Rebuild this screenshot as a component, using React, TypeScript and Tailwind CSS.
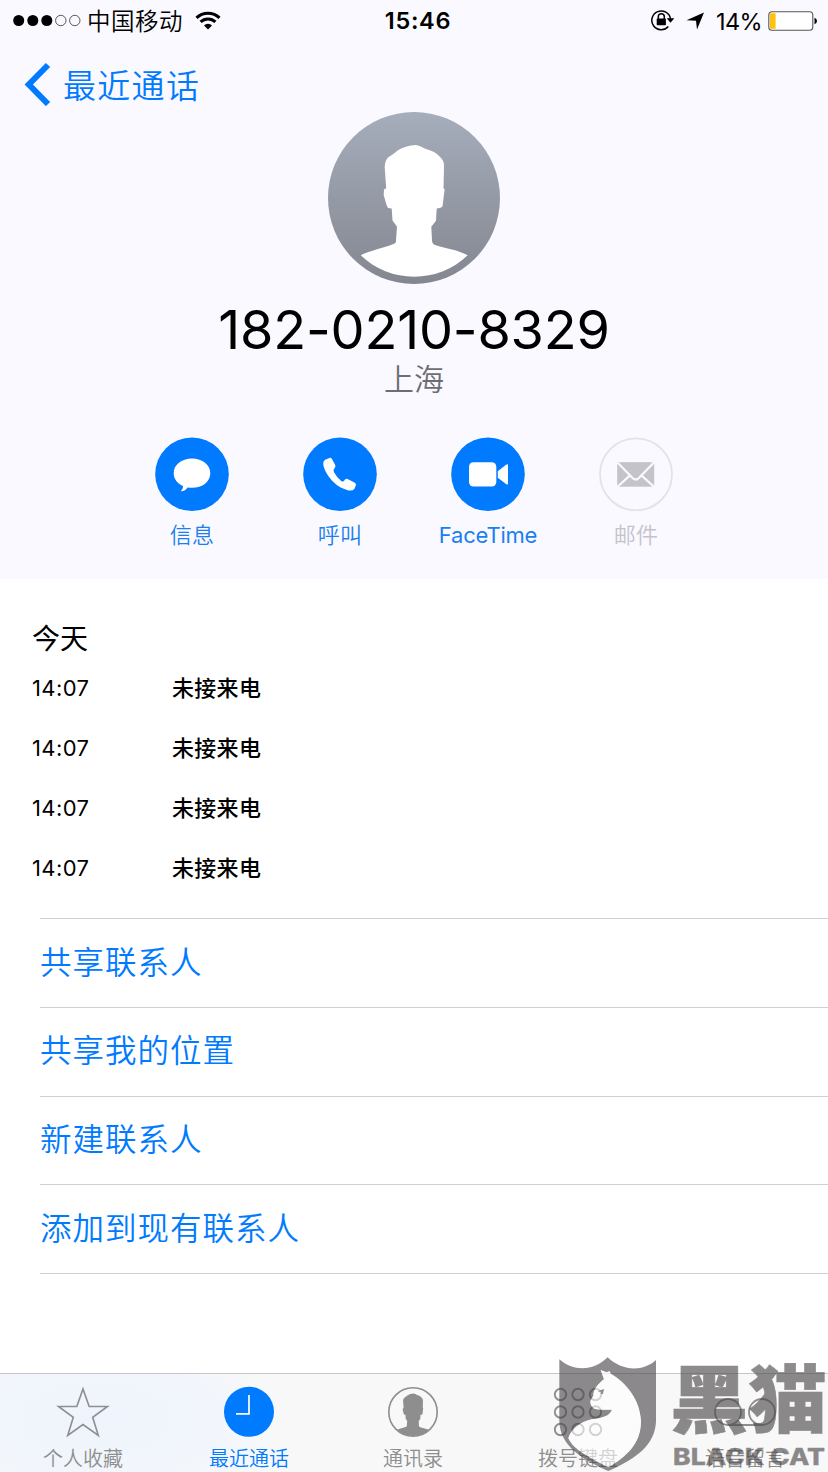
import React from "react";

const SILHOUETTE =
  "M87.7 33C92 33.5 95 36 98.7 37.3C104 39 107.500 40.500 110 43C114.500 47 116 49 116 54L115.500 76L116.600 77.500L114.500 94.500L112 96L108.700 96.500L108 108.700L103.300 114.700L104 128.500C104.300 131.500 105.500 132.500 108 133.300C118 136.500 130 138 139.700 143.300";
const SILHOUETTE_LEFT =
  "C42 138.500 56 136 65.300 132C67.500 131.200 68 130.500 68 128.500L69 114.700L64.500 108.500L63.700 96.500L60 96L58.500 93L55.700 83L56 77.500L58.200 76.300L56.700 54.700C57 50 58.500 47 60.300 45.300C63 43.500 66 41.500 69.300 38.700C74 35.800 82 33 87.700 33Z";
const BUST = `${SILHOUETTE}A77.6 77.6 0 0 1 32.7 143.3${SILHOUETTE_LEFT}`;
const BUST_LONG = `${SILHOUETTE}L160 175H12L32.7 143.3${SILHOUETTE_LEFT}`;

function StatusBar() {
  return (
    <div className="grid h-[42px] grid-cols-3 items-center text-black">
      <div className="flex items-center pl-[13px]">
        <svg width="70" height="14" viewBox="0 0 70 14">
          <circle cx="5.7" cy="6.500" r="5.500" />
          <circle cx="19.8" cy="6.500" r="5.500" />
          <circle cx="33.800" cy="6.500" r="5.500" />
          <circle cx="47.800" cy="6.500" r="5.200" fill="none" stroke="#444" strokeWidth=".9" />
          <circle cx="61.800" cy="6.500" r="5.200" fill="none" stroke="#444" strokeWidth=".9" />
        </svg>
        <span className="ml-[4px] mt-[2px] text-[23.500px] font-[350] leading-[40px] tracking-[0.5px]">中国移动</span>
        <svg className="ml-[12px] mb-[2px]" width="26" height="19" viewBox="0 0 26 19">
          <g fill="none" stroke="#000" strokeWidth="3">
            <path d="M1.500 6.800A16.500 16.500 0 0 1 24.500 6.800" />
            <path d="M5.600 10.900A10.600 10.600 0 0 1 20.400 10.900" />
          </g>
          <path d="M9 14.400A5.700 5.700 0 0 1 17 14.400L13 18.500Z" />
        </svg>
      </div>
      <div className="pl-[8px] text-center text-[23.500px] font-semibold leading-[40px] tracking-[0.700px]">15:46</div>
      <div className="flex items-center justify-end pr-[10px]">
        <svg className="mb-[2px]" width="24" height="22" viewBox="0 0 24 22">
          <path d="M17.300 17.500A9.400 9.400 0 1 1 19.500 10" fill="none" stroke="#000" strokeWidth="1.500" />
          <path d="M15.700 9.200H23.300L19.500 13.700Z" />
          <rect x="5.700" y="9.600" width="9.200" height="6.600" rx=".8" />
          <path d="M7.300 10V7.800A3 3 0 0 1 13.300 7.800V10" fill="none" stroke="#000" strokeWidth="1.500" />
        </svg>
        <svg className="ml-[11px]" width="19" height="18" viewBox="0 0 19 18">
          <path d="M18 .5L11 17.500L10 8.800L.5 8.300Z" />
        </svg>
        <span className="ml-[11px] mt-[1px] text-[23.500px] leading-[40px] tracking-[-0.6px]">14%</span>
        <svg className="ml-[6px] mb-[1px]" width="50" height="22" viewBox="0 0 50 22">
          <rect x=".8" y="1.700" width="44" height="18.500" rx="3.300" fill="#fff" stroke="#555" strokeWidth="1.100" />
          <path d="M2.500 3.200H7.600V18.700H2.500Q2 18.700 2 17.500V4.500Q2 3.200 2.500 3.200Z" fill="#fdc30c" />
          <path d="M46.500 7.700Q49 8.600 49 11Q49 13.400 46.500 14.300Z" />
        </svg>
      </div>
    </div>
  );
}

function Avatar() {
  return (
    <svg width="172" height="172" viewBox="0 0 172 172">
      <defs>
        <linearGradient id="avatar" x1="0" y1="0" x2="0" y2="1">
          <stop offset="0" stopColor="#a6adbb" />
          <stop offset="1" stopColor="#838790" />
        </linearGradient>
      </defs>
      <circle cx="86" cy="86" r="86" fill="url(#avatar)" />
      <path d={BUST} fill="#fff" />
    </svg>
  );
}

const actions = [
  {
    label: "信息",
    icon: (
      <path
        d="M37 21.600C47.500 21.600 55.300 28 55.300 36.200C55.300 44.600 47.500 50.800 37 50.800C35.500 50.800 34 50.700 32.600 50.400C31 52.800 28.500 54.500 25.700 54.200C27.300 52.700 28.100 51 28 49C22.200 46.400 18.700 41.700 18.700 36.200C18.700 28 26.500 21.600 37 21.600Z"
        fill="#fff"
      />
    ),
  },
  {
    label: "呼叫",
    icon: (
      <path
        d="M22.200 22.800L26.500 20.900Q28 20.500 29 22L32.300 28.300Q33 30 31.500 31.300Q29.800 32.600 31 35.200Q34 40.500 38.200 44Q40.200 45.300 41.500 43.300Q42.700 41.300 44.500 42L51.500 45.500Q53.300 46.500 53 48L51.300 52Q49.500 54.200 45.500 53.400C38 51.500 32 47.500 27.300 41.500C23 36 20.300 30.500 20.200 26.500Q20.200 24 22.200 22.800Z"
        fill="#fff"
      />
    ),
  },
  {
    label: "FaceTime",
    latin: true,
    icon: (
      <g fill="#fff">
        <rect x="18" y="25.300" width="27.300" height="24.200" rx="4.500" />
        <path d="M46.800 34.200L55 27.800Q57 26.500 57 28.500V46.300Q57 48.300 55 47L46.800 40.700Z" />
      </g>
    ),
  },
  {
    label: "邮件",
    disabled: true,
    icon: (
      <g>
        <rect x="18.200" y="25.200" width="37" height="24.500" fill="#c4c3ca" />
        <path
          d="M18.200 25.200L33.800 41.200Q36.700 43.800 39.600 41.200L55.200 25.200M18.200 50L31 38.400M55.200 50L42.400 38.400"
          fill="none"
          stroke="#faf9ff"
          strokeWidth="2.200"
        />
      </g>
    ),
  },
];

function Actions() {
  return (
    <div className="grid grid-cols-4 px-[118px] pt-[41px]">
      {actions.map((a) => (
        <div key={a.label} className={`flex flex-col items-center ${a.disabled ? "text-[#c4c3ca]" : "text-[#1a7ff0]"}`}>
          <svg width="74" height="74" viewBox="0 0 74 74">
            {a.disabled ? (
              <circle cx="37" cy="37.300" r="36" fill="none" stroke="#e3e2e8" strokeWidth="1.800" />
            ) : (
              <circle cx="37" cy="37.200" r="36.800" fill="#007aff" />
            )}
            {a.icon}
          </svg>
          <span
            className={
              a.latin
                ? "mt-[8px] text-[22px] leading-[32px] tracking-[-0.2px]"
                : "mt-[8px] text-[22px] font-[350] leading-[32px] tracking-[0.3px]"
            }
          >
            {a.label}
          </span>
        </div>
      ))}
    </div>
  );
}

const calls = ["14:07", "14:07", "14:07", "14:07"];
const links = ["共享联系人", "共享我的位置", "新建联系人", "添加到现有联系人"];

const tabs = [
  {
    label: "个人收藏",
    icon: (
      <path
        d="M25 2L31.200 19.500H49.500L34.700 30.300L40.300 48.500L25 37.600L9.700 48.500L15.300 30.300L.5 19.500H18.800Z"
        fill="none"
        stroke="#8e8e8e"
        strokeWidth="1.600"
      />
    ),
  },
  {
    label: "最近通话",
    active: true,
    icon: (
      <g>
        <circle cx="25" cy="24.800" r="25" fill="#007aff" />
        <path d="M25 8V26.800H12" fill="none" stroke="#fff" strokeWidth="1.700" />
      </g>
    ),
  },
  {
    label: "通讯录",
    icon: (
      <g>
        <clipPath id="contact">
          <circle cx="25" cy="25" r="24" />
        </clipPath>
        <g clipPath="url(#contact)">
          <path d={BUST_LONG} transform="translate(-3.900 -4.500) scale(.335)" fill="#8e8e8e" />
        </g>
        <circle cx="25" cy="25" r="24.200" fill="none" stroke="#8e8e8e" strokeWidth="1.600" />
      </g>
    ),
  },
  {
    label: "拨号键盘",
    icon: (
      <g fill="none" stroke="#8e8e8e" strokeWidth="1.900">
        {[6.500, 24, 41.500].map((y) =>
          [7.500, 25, 42.500].map((x) => <circle key={`${x}-${y}`} cx={x} cy={y + 1} r="5.700" />),
        )}
      </g>
    ),
  },
  {
    label: "语音留言",
    icon: (
      <g fill="none" stroke="#8e8e8e" strokeWidth="1.800">
        <circle cx="8" cy="25" r="13" />
        <circle cx="42" cy="25" r="13" />
        <path d="M8 38H42" />
      </g>
    ),
  },
];

function TabBar() {
  return (
    <nav className="grid h-[99px] shrink-0 grid-cols-[166px_166px_162px_168px_1fr] border-t-[1.500px] border-[#c6c6c8] bg-[#f8f8f8] bg-[radial-gradient(ellipse_190px_90px_at_95px_45px,#eff4fc_0%,#f2f6fc_65%,#f8f8f8_100%)]">
      {tabs.map((t) => (
        <div key={t.label} className={`flex flex-col items-center pt-[13px] ${t.active ? "text-[#007aff]" : "text-[#8e8e8e]"}`}>
          <svg className="overflow-visible" width="50" height="50" viewBox="0 0 50 50">
            {t.icon}
          </svg>
          <span className="mt-[7px] text-[20px] font-[350] leading-[30px]">{t.label}</span>
        </div>
      ))}
    </nav>
  );
}

function Watermark() {
  return (
    <div className="pointer-events-none absolute bottom-0 right-0 flex h-[122px] w-[298px]">
      <svg className="shrink-0" width="150" height="122" viewBox="0 0 450 366">
        <path
          fillRule="evenodd"
          d="M88 28C130 65 190 65 233 22C278 65 340 65 378 30V215C374 285 320 325 235 363C150 325 91 285 88 215ZM212 60L222 88C200 105 190 120 190 138C178 152 180 160 186 170C194 180 210 179 246 179C238 200 215 203 185 208C150 215 122 240 115 264C130 300 185 325 235 352C285 322 333 285 333 213C330 150 290 98 242 71L239 64L229 67Z"
          fill="#4b484a"
          fillOpacity=".63"
        />
        <path
          d="M212 60L222 88C200 105 190 120 190 138C178 152 180 160 186 170C194 180 210 179 246 179C238 200 215 203 185 208C150 215 122 240 115 264C130 300 185 325 235 352C285 322 333 285 333 213C330 150 290 98 242 71L239 64L229 67Z"
          fill="#fff"
          fillOpacity=".6"
        />
        <path d="M203 124L222 117L219 131L213 133L214 125Z" fill="#4b484a" fillOpacity=".63" />
      </svg>
      <svg className="shrink-0" width="148" height="122" viewBox="-7 0 148 122" overflow="visible">
        <g fill="#4b484a" stroke="#4b484a" opacity=".63">
          <text
            x="-17"
            y="77"
            fontSize="74"
            fontWeight="900"
            strokeWidth=".6"
            textLength="157"
            lengthAdjust="spacingAndGlyphs"
            fontFamily="'Noto Sans CJK SC', sans-serif"
          >
            黑猫
          </text>
          <text
            x="-14"
            y="114.500"
            fontSize="22.500"
            fontWeight="800"
            strokeWidth=".3"
            textLength="152"
            lengthAdjust="spacingAndGlyphs"
            fontFamily="Inter, sans-serif"
          >
            BLACK CAT
          </text>
        </g>
      </svg>
    </div>
  );
}

export default function App() {
  return (
    <div className="relative flex h-[1472px] w-[828px] flex-col overflow-hidden bg-white font-['Inter','Noto_Sans_CJK_SC',sans-serif] text-black">
      <header className="h-[579px] shrink-0 bg-[#faf9ff]">
        <StatusBar />
        <div className="flex h-[70px] items-start pl-[24px] pt-[20px] text-[#007aff]">
          <svg width="28" height="44" viewBox="0 0 28 44">
            <path d="M24 3L4.800 22.500L24 42" fill="none" stroke="#007aff" strokeWidth="6" />
          </svg>
          <span className="ml-[11px] mt-[2px] text-[33px] font-[350] leading-[44px] tracking-[1.300px]">最近通话</span>
        </div>
        <div className="flex flex-col items-center">
          <Avatar />
          <h1 className="mt-[14px] text-[54px] leading-[64px] tracking-[-0.2px]">182-0210-8329</h1>
          <p className="text-[30px] font-[350] leading-[34px] text-[#6d6d72]">上海</p>
        </div>
        <Actions />
      </header>
      <main className="flex-1">
        <h2 className="pl-[32px] pt-[40px] text-[28px] leading-[40px]">今天</h2>
        <ul className="-mt-px">
          {calls.map((time, i) => (
            <li key={i} className="flex h-[60px] items-center pl-[32px] text-[22px]">
              <span className="w-[140px] tracking-[0.4px]">{time}</span>
              <span className="font-medium tracking-[0.3px]">未接来电</span>
            </li>
          ))}
        </ul>
        <ul className="ml-[40px] mt-[20.400px] border-t-[1.500px] border-[#d0d0d3]">
          {links.map((l) => (
            <li
              key={l}
              className="h-[88.700px] border-b-[1.500px] border-[#d0d0d3] pt-[20.400px] text-[31.500px] font-[350] leading-[46px] tracking-[1px] text-[#007aff]"
            >
              {l}
            </li>
          ))}
        </ul>
      </main>
      <TabBar />
      <Watermark />
    </div>
  );
}
